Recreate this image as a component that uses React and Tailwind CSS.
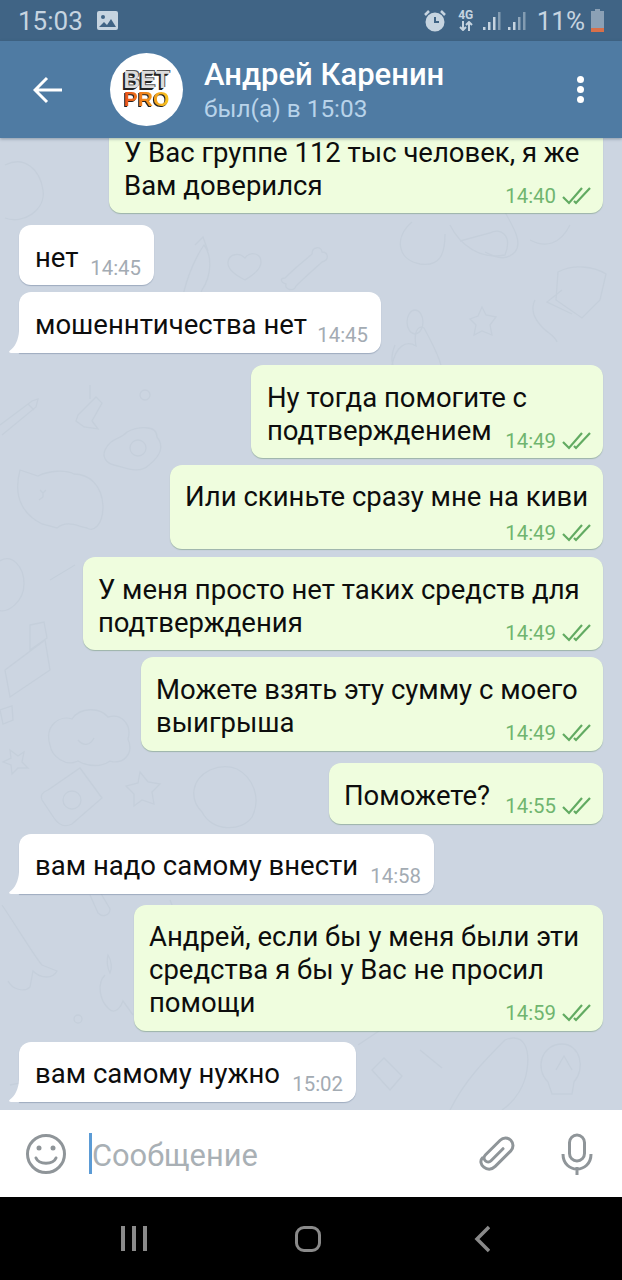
const messages = [
  { out: true, width: 'w-[494px]', pad: 'pl-[15px]', lines: ['У Вас группе 112 тыс человек, я же', 'Вам доверился'], time: '14:40' },
  { width: 'w-[135px]', gap: 'mt-3', lines: ['нет'], time: '14:45' },
  { width: 'w-[362px]', gap: 'mt-[7px]', tall: true, tail: true, lines: ['мошеннтичества нет'], time: '14:45' },
  { out: true, width: 'w-[352px]', gap: 'mt-3', lines: ['Ну тогда помогите с', 'подтверждением'], time: '14:49' },
  { out: true, width: 'w-[433px]', gap: 'mt-[7px]', below: true, pad: 'pl-[15px]', lines: ['Или скиньте сразу мне на киви'], time: '14:49' },
  { out: true, width: 'w-[520px]', gap: 'mt-2', pad: 'pl-[15px]', lines: ['У меня просто нет таких средств для', 'подтверждения'], time: '14:49' },
  { out: true, width: 'w-[462px]', gap: 'mt-[7px]', pad: 'pl-[15px]', tall: true, lines: ['Можете взять эту сумму с моего', 'выигрыша'], time: '14:49' },
  { out: true, width: 'w-[274px]', gap: 'mt-3', pad: 'pl-[15px]', tall: true, lines: ['Поможете?'], time: '14:55' },
  { width: 'w-[415px]', gap: 'mt-2.5', tight: true, tail: true, lines: ['вам надо самому внести'], time: '14:58' },
  { out: true, width: 'w-[469px]', gap: 'mt-[11px]', pad: 'pl-[15px]', tight: true, lines: ['Андрей, если бы у меня были эти', 'средства я бы у Вас не просил', 'помощи'], time: '14:59' },
  { width: 'w-[337px]', gap: 'mt-[11px]', tight: true, tail: true, lines: ['вам самому нужно'], time: '15:02' },
]

function Ticks() {
  return (
    <svg width="29" height="18" viewBox="0 0 29 18" fill="none" stroke="#62ab62" strokeWidth="2.200" className="ml-1.5">
      <path d="M1 10l6 6L20 1" />
      <path d="M12 14l2 2L28 1" />
    </svg>
  )
}

function bubbleSpacing(tall, tight, below) {
  if (below) return 'pt-[15px] pb-[6px]'
  if (tight) return 'pt-[15px] pb-2'
  if (tall) return 'pt-4 pb-2'
  return 'pt-4 pb-[7px]'
}

function Bubble({ out, width, gap = '', pad = 'pl-4', tail, tall, tight, below, lines, time }) {
  return (
    <div className={`relative flex flex-col rounded-xl ${bubbleSpacing(tall, tight, below)} ${out ? 'pr-3' : 'pr-[13px]'} ${pad} ${width} ${gap} ${tail ? 'rounded-bl-none' : ''} ${out ? 'self-end bg-[#effdde] shadow-[0_1px_1px_rgba(100,140,100,0.45)]' : 'self-start bg-white shadow-[0_1px_1px_rgba(90,110,140,0.4)]'}`}>
      {tail && (
        <svg width="14" height="22" viewBox="0 0 14 22" className="absolute -left-2.5 bottom-0" fill="#ffffff">
          <path d="M10 0h4v22H2C0 22-.5 20.500 1 19.500 6 16 9.500 9 10 0z" />
        </svg>
      )}
      <div className="relative text-[27.500px] leading-[33px] text-[#0d0d0d] whitespace-nowrap">
        {lines.map((l) => <div key={l}>{l}</div>)}
      </div>
      <div className={`flex items-center self-end h-5 text-[20.400px] leading-5 ${below ? 'mt-2.5' : '-mt-4'} ${out ? 'text-[#70b56f]' : 'text-[#a3abb3]'}`}>
        {time}
        {out && <Ticks />}
      </div>
    </div>
  )
}

function Wallpaper() {
  return (
    <svg className="absolute inset-0 w-full h-full" viewBox="0 138 622 972" fill="none" stroke="#c5cfdb" strokeWidth="1.300">
      {/* top band */}
      <path d="M5 165c20-10 35 5 38 25s-20 35-38 28" />
      <path d="M182 300c5-25 15-45 22-55 8 10 8 30-2 45l-8 20zM195 245l8-8 5 14" />
      <path d="M245 258c6-8 16-4 16 4s-10 14-16 18c-8-4-18-10-17-18s11-10 17-4z" />
      <path d="M285 278c10-10 18-16 27-24 0-8 10-8 10-2 6 0 8 8 0 10-10 9-18 16-26 24-2 6-12 4-10-2-6-2-6-6-1-6z" />
      <path d="M412 222c-18 15-15 38 8 42 20 3 25-10 25-30M450 225c10 20 30 35 55 30 8-20-5-28-15-22l-30 8" />
      <path d="M505 212c8 15 18 30 10 40-10 10-20 5-30 0M530 240c15 8 30 5 40-15" />
      <path d="M558 272c15-8 35-6 48 2l-6 26-18 18-26-18zM562 290l-15 12 25 12" />
      <path d="M392 365c-15 15-15 45 10 60 30 10 40-10 42-35 2-20-8-40-20-62-8-4-10 8-8 18-10-6-20 0-24 19zM395 345c-4 10-4 15-2 20" />
      <ellipse cx="415" cy="322" rx="8" ry="12" />
      <path d="M482 307l4 8 10 2-6 8 2 10-10-4-8 4 2-10-6-6 8-3z" />
      <path d="M535 300c-6 12 2 22 8 28s12 8 14 14" />
      {/* left column */}
      <path d="M0 425l32-24 6-2-2 8-34 28M28 404l6 6" />
      <path d="M78 415l18-18 6 6-10 18 6 8-14-2-8-6zM90 385v14" />
      <circle cx="145" cy="395" r="5" />
      <path d="M105 450c5-12 15-10 22-18 10-5 30-8 30 5 8 10 2 20-8 28-10 10-25 2-35 0-8-2-12-8-9-15z" />
      <circle cx="138" cy="448" r="8" />
      <path d="M20 470l18 6c12-6 28-6 36-2 14 0 28 10 29 32 0 20-10 26-16 22-10-2-20-8-30 0l-15-4c-16-8-30-24-22-54z" />
      <path d="M40 490l3 3 3-3M43 493v4l-4 3" />
      <path d="M-2 562c14-10 26 5 26 22s-16 30-26 26" />
      <path d="M5 670l40-30 5 30-40 27zM30 625l14-3 3 16-17 12z" />
      <path d="M50 580l25-15" />
      <path d="M50 745c-6-20 10-30 22-26 8-12 28-12 36-2 14-4 24 8 20 22 6 14-4 26-18 22-8 6-22 6-32 0-12 6-26-4-28-16z" />
      <path d="M78 740c5 6 12 6 16-2" />
      <path d="M0 710l12-4 1 14-10 4zM10 750l8 6 6-4-2 10 6 6-10 0-6 6-1-9-8-3 8-4z" />
      <path d="M140 772l8 10 12 2-8 8 2 12-12-4-8 6 0-12-8-8 12-3z" />
      <path d="M48 790l32-22 22 30-30 26c-8 4-14 0-18-6l-12-18c-2-4 0-8 6-10z" />
      <circle cx="72" cy="800" r="9" />
      {/* middle */}
      <path d="M210 770c-20 10-20 30-8 42 10 20 40 20 50 5 10-20 0-40-15-48-10-4-20-2-27 1z" />
      <path d="M170 900c4 12 12 25 20 30M90 895l8 18c5 5 12 2 12-4l-14-24M2 905c20 30 35 55 40 60l15 6c-4 8-16 8-24 0l-3 16c-6 6-18 2-22-6" />
      <path d="M105 975c-8 8-6 25 4 34 6 6 12-2 14-8l10 14M108 955c-2 8 0 14 2 18 2-4 2-12-2-18z" />
      <circle cx="78" cy="1019" r="4" />
      {/* bottom right */}
      <path d="M358 1045l45-30M372 1070l12-12 18 18-12 14zM420 1050l22 18" />
      <path d="M450 1110c15-30 35-50 55-70 20-8 25 10 22 30-2 14-10 30-25 40" />
      <path d="M548 1082c-14-14-6-38 14-38 18 0 24 24 12 38l-2 12h-20zM556 1070l8-14 8 14" />
      <path d="M10 1085c20-5 30-2 40 6M90 1090c14-10 30-10 45 2" />
    </svg>
  )
}

export default function App() {
  return (
    <div className="w-[622px] h-[1280px] flex flex-col overflow-hidden bg-black font-['Roboto',sans-serif]">
      <div className="h-[41px] shrink-0 flex items-center pl-[18px] pr-[17px] bg-[#406485] text-[#c6d4e0]">
        <span className="text-[26px] leading-none">15:03</span>
        <svg width="21" height="19" viewBox="0 0 21 19" className="ml-[14px]">
          <rect width="21" height="19" rx="2" fill="#c6d4e0" />
          <circle cx="6" cy="6" r="2" fill="#406485" />
          <path d="M2 16l5-5 3 3 4-6 5 8z" fill="#406485" />
        </svg>
        <div className="ml-auto flex items-center">
          <svg width="24" height="24" viewBox="0 0 24 24" fill="none" stroke="#c6d4e0" strokeWidth="3">
            <circle cx="12" cy="13" r="8" fill="#c6d4e0" />
            <path d="M12 8v5h4" stroke="#406485" strokeWidth="2" />
            <path d="M2 6l4-4M22 6l-4-4" strokeWidth="2.500" />
          </svg>
          <div className="ml-[11px] w-4 flex flex-col items-center">
            <span className="text-[12px] leading-[11px] font-bold">4G</span>
            <svg width="14" height="10" viewBox="0 0 14 10" fill="none" stroke="#c6d4e0" strokeWidth="2">
              <path d="M4 0v9M1 6l3 3 3-3M10 10V1M7 4l3-3 3 3" />
            </svg>
          </div>
          <svg width="20" height="20" viewBox="0 0 20 20" className="ml-[9px]" fill="#c6d4e0">
            <rect x="0" y="16" width="2.500" height="3" />
            <rect x="5" y="11" width="2.500" height="8" />
            <rect x="10" y="6" width="2.500" height="13" />
            <rect x="15" y="1" width="2.500" height="18" opacity="0.5" />
          </svg>
          <svg width="20" height="20" viewBox="0 0 20 20" className="ml-[5px]" fill="#c6d4e0">
            <rect x="0" y="16" width="2.500" height="3" />
            <rect x="5" y="11" width="2.500" height="8" />
            <rect x="10" y="6" width="2.500" height="13" opacity="0.6" />
            <rect x="15" y="1" width="2.500" height="18" opacity="0.5" />
          </svg>
          <span className="ml-[9px] text-[26px] leading-none">11%</span>
          <svg width="15" height="23" viewBox="0 0 15 23" className="ml-[5px]">
            <path d="M5 0h5v2h4v21H1V2h4z" fill="#8ba0b5" />
            <rect x="1" y="19" width="13" height="4" fill="#d8704a" />
          </svg>
        </div>
      </div>

      <div className="relative z-10 h-[97px] shrink-0 flex items-center bg-[#4f7ba3] shadow-[0_1px_3px_rgba(40,60,80,0.4)]">
        <svg width="30" height="28" viewBox="0 0 30 28" fill="none" stroke="#ffffff" strokeWidth="3" className="ml-[33px]">
          <path d="M29 14H3M14 2L2 14l12 12" />
        </svg>
        <div className="ml-[47px] w-[73px] h-[73px] rounded-full bg-white flex flex-col items-center justify-center font-['Liberation_Sans',sans-serif] font-bold">
          <div className="text-[23px] leading-[18px] text-[#dcdcdc] [text-shadow:-1px_1px_0_#222,-2px_2px_0_#222,1px_-1px_0_#555]">BET</div>
          <div className="text-[21px] leading-[19px] text-transparent bg-clip-text bg-gradient-to-r from-[#e8501c] via-[#f08a1c] to-[#f7c51e] [filter:drop-shadow(-1px_1px_0_#222)]">PRO</div>
        </div>
        <div className="ml-[21px] pt-[3px] flex flex-col">
          <span className="text-[31px] leading-[36px] font-medium text-white">Андрей Каренин</span>
          <span className="text-[24.400px] leading-[32px] text-[#b8d3ea]">был(а) в 15:03</span>
        </div>
        <div className="ml-auto mr-[38px] flex flex-col gap-[3px]">
          <div className="w-[7px] h-[7px] rounded-full bg-white" />
          <div className="w-[7px] h-[7px] rounded-full bg-white" />
          <div className="w-[7px] h-[7px] rounded-full bg-white" />
        </div>
      </div>

      <div className="relative h-[972px] shrink-0 overflow-hidden bg-[#ccd5e1]">
        <Wallpaper />
        <div className="relative h-full flex flex-col justify-end pl-[19px] pr-[19px] pb-2">
          {messages.map((m, i) => <Bubble key={i} {...m} />)}
        </div>
      </div>

      <div className="h-[87px] shrink-0 flex items-center bg-white">
        <svg width="42" height="42" viewBox="0 0 42 42" fill="none" stroke="#8f9599" strokeWidth="3" className="ml-[25px]">
          <circle cx="21" cy="21" r="18.500" />
          <path d="M11 25c3 7 17 7 20 0" strokeLinecap="round" />
          <circle cx="14" cy="15" r="2.500" fill="#8f9599" stroke="none" />
          <circle cx="28" cy="15" r="2.500" fill="#8f9599" stroke="none" />
        </svg>
        <div className="ml-[22px] w-[3px] h-[41px] bg-[#5b9bd5]" />
        <span className="pt-[6px] text-[30.800px] leading-none text-[#a9b0b5]">Сообщение</span>
        <svg width="38" height="38" viewBox="-19 -19 38 38" fill="none" stroke="#8f9599" strokeWidth="3" strokeLinecap="round" className="ml-auto">
          <path transform="rotate(45)" d="M.5-8V9a4 4 0 0 1-8 0V-12a7.500 7.500 0 0 1 15 0V10c0 11-15 11-15 3" />
        </svg>
        <svg width="32" height="42" viewBox="0 0 32 42" fill="none" stroke="#8f9599" strokeWidth="3" className="ml-[45px] mr-[29px]">
          <rect x="8.500" y="2" width="15" height="26" rx="7.500" />
          <path d="M2 21c0 20 28 20 28 0M16 34v8" />
        </svg>
      </div>

      <div className="flex-1 flex items-center bg-black">
        <div className="ml-[121px] flex gap-[7px]">
          <div className="w-[4px] h-[25px] bg-[#8a8a8a]" />
          <div className="w-[4px] h-[25px] bg-[#8a8a8a]" />
          <div className="w-[4px] h-[25px] bg-[#8a8a8a]" />
        </div>
        <div className="ml-[148px] w-[26px] h-[26px] rounded-[9px] border-[3px] border-[#8a8a8a]" />
        <svg width="16" height="28" viewBox="0 0 16 28" fill="none" stroke="#8a8a8a" strokeWidth="3.500" className="ml-[153px]">
          <path d="M15 2L3 14l12 12" />
        </svg>
      </div>
    </div>
  )
}
